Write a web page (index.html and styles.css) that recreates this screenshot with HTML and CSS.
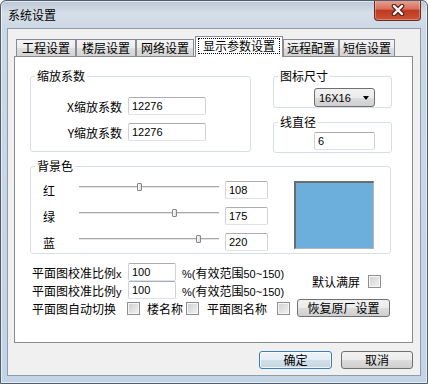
FILE: index.html
```html
<!DOCTYPE html>
<html lang="zh-CN">
<head>
    <meta charset="UTF-8">
    <title>系统设置</title>
    <link rel="stylesheet" href="styles.css">
</head>
<body>
    <div class="window">
        <div class="titlebar">
            <span class="title">系统设置</span>
            <span class="close">
                <svg width="14" height="12" viewBox="0 0 14 12">
                    <path d="M3 2 L11 10 M11 2 L3 10" stroke="#5a2218" stroke-width="4.6" stroke-linecap="round"/>
                    <path d="M3 2 L11 10 M11 2 L3 10" stroke="#ffffff" stroke-width="2.4" stroke-linecap="round"/>
                </svg>
            </span>
        </div>

        <div class="client">
            <div class="tabs">
                <span class="tab">工程设置</span>
                <span class="tab">楼层设置</span>
                <span class="tab mid">网络设置</span>
                <span class="tab active"><span class="focus">显示参数设置</span></span>
                <span class="tab narrow">远程配置</span>
                <span class="tab narrow">短信设置</span>
            </div>

            <div class="panel">
                <div class="top-row">
                    <div class="group scale">
                        <div class="legend">缩放系数</div>
                        <div class="field-row first">
                            <span class="field-label">X缩放系数</span>
                            <input class="num scale-input" value="12276">
                        </div>
                        <div class="field-row">
                            <span class="field-label">Y缩放系数</span>
                            <input class="num scale-input" value="12276">
                        </div>
                    </div>

                    <div class="right-col">
                        <div class="group icon-size">
                            <div class="legend">图标尺寸</div>
                            <div class="combo">
                                <span>16X16</span>
                                <span class="arrow"></span>
                            </div>
                        </div>
                        <div class="group line-width">
                            <div class="legend">线直径</div>
                            <input class="num line-input" value="6">
                        </div>
                    </div>
                </div>

                <div class="group bg-color">
                    <div class="legend">背景色</div>
                    <div class="bg-body">
                        <div class="sliders">
                            <div class="color-row">
                                <span class="color-label">红</span>
                                <div class="slider"><div class="track"></div><span class="thumb" style="left: 58px"></span></div>
                                <input class="num color-input" value="108">
                            </div>
                            <div class="color-row">
                                <span class="color-label">绿</span>
                                <div class="slider"><div class="track"></div><span class="thumb" style="left: 93px"></span></div>
                                <input class="num color-input" value="175">
                            </div>
                            <div class="color-row">
                                <span class="color-label">蓝</span>
                                <div class="slider"><div class="track"></div><span class="thumb" style="left: 117px"></span></div>
                                <input class="num color-input" value="220">
                            </div>
                        </div>
                        <div class="swatch" style="background-color: rgb(108, 175, 220)"></div>
                    </div>
                </div>

                <div class="calib">
                    <div class="calib-rows">
                        <div class="calib-row">
                            <span class="calib-label">平面图校准比例<span class="lat">x</span></span>
                            <input class="num pct-input" value="100">
                            <span class="hint"><span class="lat">%(</span>有效范围<span class="lat">50~150)</span></span>
                        </div>
                        <div class="calib-row">
                            <span class="calib-label">平面图校准比例<span class="lat">y</span></span>
                            <input class="num pct-input" value="100">
                            <span class="hint"><span class="lat">%(</span>有效范围<span class="lat">50~150)</span></span>
                        </div>
                    </div>
                    <div class="fullscreen">
                        <span>默认满屏</span>
                        <span class="check"></span>
                    </div>
                </div>

                <div class="switch-row">
                    <span>平面图自动切换</span>
                    <span class="check c1"></span>
                    <span class="sw-text t2">楼名称</span>
                    <span class="check c2"></span>
                    <span class="sw-text t3">平面图名称</span>
                    <span class="check c3"></span>
                    <button class="btn restore">恢复原厂设置</button>
                </div>
            </div>

            <div class="actions">
                <button class="btn default ok">确定</button>
                <button class="btn cancel">取消</button>
            </div>
        </div>
    </div>
</body>
</html>
```

FILE: styles.css
```css
* {
    box-sizing: border-box;
}
body {
    margin: 0;
    font-family: "Noto Sans CJK SC", "Noto Sans CJK TC", sans-serif;
    font-size: 12px;
    color: #000;
    background: #fff;
}
.window {
    width: 428px;
    height: 384px;
    border: 1px solid #4f5d6d;
    border-radius: 6px 6px 0 0;
    background: linear-gradient(180deg, #b9c6d4 0, #d6dfe8 12px, #ccd8e5 27px, #c3d4e7 100%);
    box-shadow: inset 0 0 0 1px rgba(255, 255, 255, 0.55);
    display: flex;
    flex-direction: column;
    overflow: hidden;
}
.titlebar {
    height: 27px;
    flex-shrink: 0;
    display: flex;
    justify-content: space-between;
    align-items: flex-start;
}
.title {
    margin: 7px 0 0 7px;
    line-height: 14px;
}
.close {
    width: 47px;
    height: 21px;
    margin: -1px 6px 0 0;
    border: 1px solid #6a2a20;
    border-top: none;
    border-radius: 0 0 4px 4px;
    background: linear-gradient(180deg, #e8a596 0, #d66f5a 45%, #bf3a22 52%, #cc5234 100%);
    box-shadow: inset 0 0 0 1px rgba(255, 255, 255, 0.3);
    display: flex;
    align-items: center;
    justify-content: center;
}

/* client area */
.client {
    margin: 0 6px 7px;
    height: 348px;
    border: 1px solid #8e9cab;
    background: #f0f0f0;
    padding: 7px 7px 0 6px;
}
.tabs {
    display: flex;
    align-items: flex-end;
    height: 20px;
    padding-left: 2px;
    position: relative;
    z-index: 1;
}
.tab {
    height: 17px;
    border: 1px solid #898c95;
    border-bottom: none;
    background: linear-gradient(180deg, #f4f4f4 0, #ececec 50%, #dedede 50%, #d2d2d2 100%);
    line-height: 16px;
    padding: 0 5px;
    white-space: nowrap;
}
.tab.mid {
    padding: 0 4px;
}
.tab.narrow {
    padding: 0 3px;
}
.tab.active {
    height: 21px;
    margin: 0 0 -1px 1px;
    padding: 1px 2px 0;
    background: #fff;
}
.focus {
    display: block;
    border: 1px dotted #000;
    padding: 0 4px;
    line-height: 14px;
}
.panel {
    width: 399px;
    height: 287px;
    border: 1px solid #898c95;
    background: #fff;
    padding: 19px 0 0 15px;
}

/* group boxes */
.group {
    border: 1px solid #d5dfe5;
    border-radius: 3px;
}
.legend {
    display: table;
    margin: -8px 0 0 4px;
    padding: 0 2px;
    background: #fff;
    line-height: 14px;
}
.top-row {
    display: flex;
    align-items: flex-start;
}
.scale {
    width: 221px;
    padding-bottom: 10px;
}
.field-row {
    display: flex;
    align-items: center;
    height: 18px;
    margin-top: 8px;
}
.field-row.first {
    margin-top: 14px;
}
.field-label {
    width: 91px;
    margin-right: 6px;
    text-align: right;
}
.right-col {
    width: 119px;
    margin-left: 22px;
}
.combo {
    width: 61px;
    height: 19px;
    margin: 5px 0 0 40px;
    border: 1px solid #707070;
    border-radius: 3px;
    background: linear-gradient(180deg, #f2f2f2 0, #ebebeb 50%, #dddddd 50%, #cfcfcf 100%);
    display: flex;
    align-items: center;
    justify-content: space-between;
    padding: 0 5px 0 4px;
    font: 11px "Liberation Sans", sans-serif;
}
.arrow {
    width: 0;
    height: 0;
    border-left: 3.5px solid transparent;
    border-right: 3.5px solid transparent;
    border-top: 4px solid #000;
}
.line-width {
    margin-top: 14px;
    padding-bottom: 2px;
}

/* inputs */
input {
    display: block;
    height: 18px;
    margin: 0;
    padding: 0 0 0 3px;
    border: 1px solid;
    border-color: #abadb3 #cfd3d9 #dde2e8 #cfd3d9;
    border-radius: 2px;
    background: #fff;
    color: #000;
    font: 11px "Liberation Sans", sans-serif;
    outline: none;
}
.scale-input {
    width: 78px;
}
.line-input {
    width: 61px;
    margin: 3px 0 0 40px;
}
.color-input {
    width: 43px;
    margin-left: 6px;
}
.pct-input {
    width: 48px;
}

/* background colour */
.bg-color {
    width: 361px;
    margin-top: 13px;
}
.bg-body {
    display: flex;
    align-items: flex-start;
    margin-top: 8px;
    padding: 0 0 2px 12px;
}
.sliders {
    display: flex;
    flex-direction: column;
    gap: 8px;
}
.color-row {
    display: flex;
    align-items: center;
    height: 18px;
}
.color-label {
    width: 12px;
}
.slider {
    width: 140px;
    height: 18px;
    margin-left: 24px;
    position: relative;
}
.track {
    margin-top: 5px;
    height: 2px;
    border-top: 1px solid #a9a9a9;
    border-bottom: 1px solid #e4e4e4;
}
.thumb {
    position: absolute;
    top: 2px;
    width: 5px;
    height: 8px;
    border: 1px solid #868686;
    border-radius: 1px;
    background: linear-gradient(90deg, #ffffff, #dcdcdc);
}
.swatch {
    width: 80px;
    height: 68px;
    margin-left: 26px;
    border-style: solid;
    border-width: 2px 1px 1px 2px;
    border-color: #6c6c6c #b4b4b4 #b4b4b4 #6c6c6c;
}

/* calibration rows */
.calib {
    display: flex;
    align-items: center;
    margin-top: 9px;
    padding-left: 2px;
}
.calib-rows {
    width: 280px;
}
.calib-row {
    display: flex;
    align-items: center;
    height: 18px;
}
.calib-label {
    width: 96px;
}
.lat {
    font: 11px "Liberation Sans", sans-serif;
}
.hint {
    margin-left: 6px;
    white-space: nowrap;
}
.fullscreen {
    display: flex;
    align-items: center;
    gap: 8px;
}
.check {
    display: inline-block;
    width: 13px;
    height: 13px;
    border: 1px solid #8e8f8f;
    background: linear-gradient(135deg, #cfcfcf, #f3f3f3);
    box-shadow: inset 0 0 0 1px #f6f6f6;
}
.switch-row {
    display: flex;
    align-items: center;
    height: 18px;
    padding-left: 2px;
}
.c1 {
    margin-left: 11px;
}
.t2 {
    margin-left: 7px;
}
.c2 {
    margin-left: 3px;
}
.t3 {
    margin-left: 8px;
}
.c3 {
    margin-left: 10px;
}

/* buttons */
.btn {
    height: 18px;
    padding: 0;
    border: 1px solid #707070;
    border-radius: 3px;
    background: linear-gradient(180deg, #f2f2f2 0, #ebebeb 50%, #dddddd 50%, #cfcfcf 100%);
    font: 12px "Noto Sans CJK SC", sans-serif;
    line-height: 16px;
    color: #000;
}
.restore {
    width: 93px;
    margin-left: 7px;
}
.btn.default {
    border-color: #3c7fb1;
    background: linear-gradient(180deg, #eef5fa 0, #e3edf4 50%, #d2dfe9 50%, #c5d5e2 100%);
    box-shadow: inset 0 0 0 1px rgba(255, 255, 255, 0.7);
}
.actions {
    display: flex;
    justify-content: flex-end;
    gap: 9px;
    margin-top: 8px;
}
.ok {
    width: 73px;
}
.cancel {
    width: 72px;
}
```
